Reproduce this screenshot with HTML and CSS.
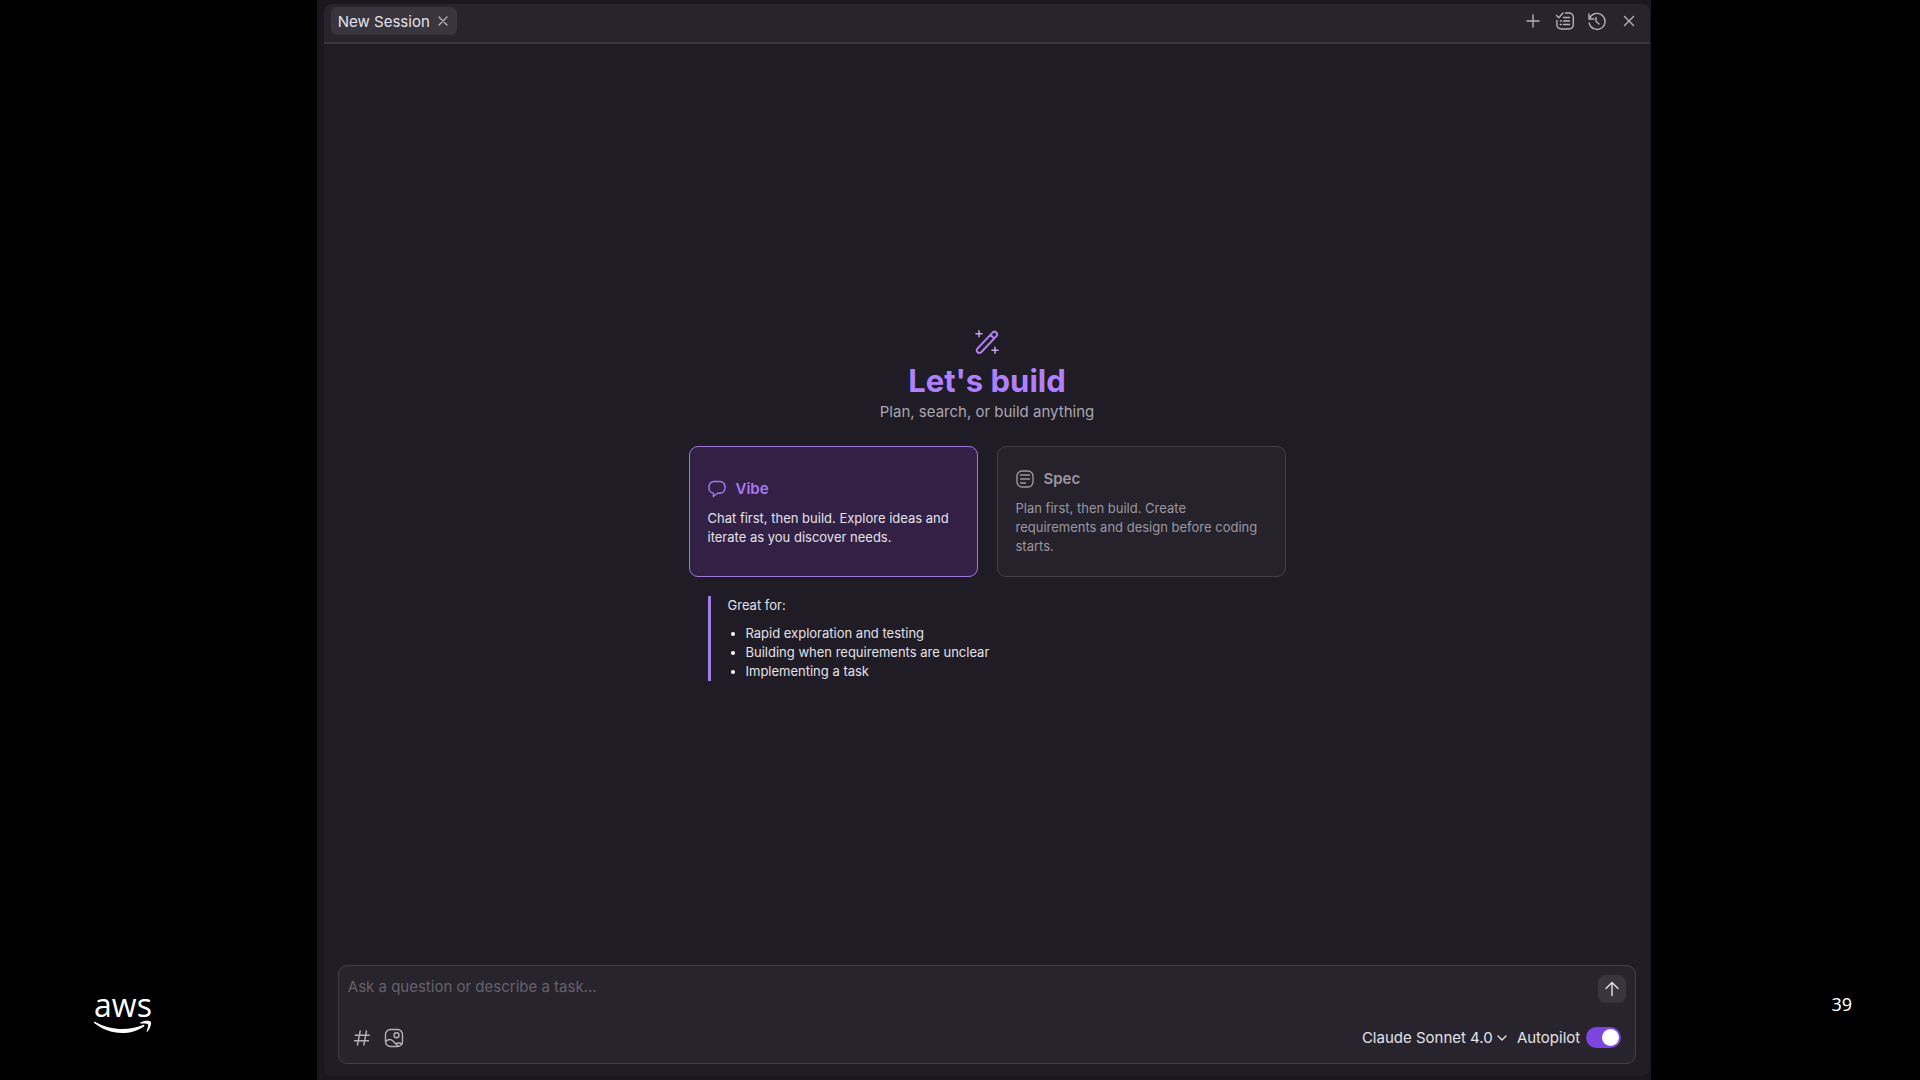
FILE: index.html
```html
<!DOCTYPE html>
<html lang="en">
<head>
    <meta charset="UTF-8">
    <meta name="viewport" content="width=device-width, initial-scale=1.0">
    <title>New Session</title>
    <link rel="stylesheet" href="styles.css">
</head>
<body>

    <!-- Left side with logo -->
    <aside class="side-left">
        <div class="logo">
            <span class="logo-text">aws</span>
            <svg class="logo-smile" width="60" height="16" viewBox="0 0 60 16" fill="#fff">
                <path d="M1 2.2c.4-.6 1.100-.5 1.900 0C10.500 6.500 20 9 29.500 9c6.500 0 14-1.400 20.500-4.100 1.200-.5 2 .7.900 1.500C45 10.700 36.500 13 29 13 18.500 13 9 9.200 1.500 3.300 1 2.900.8 2.500 1 2.200z"/>
                <path d="M47.500 2.500c2.500-1.700 8.800-2.300 10.200-.9 1.100 1.500-.4 7.300-3.200 9.800-.7.500-1.200.2-.9-.5.9-2.200 2-5.500 1.300-6.600-.8-1.100-4.600-.9-6.900-.7-.9.100-1.100-.6-.5-1.100z"/>
            </svg>
        </div>
    </aside>

    <!-- Chat window -->
    <main class="window">
        <section class="panel">
            <header class="tabs">
                <div class="tab">
                    <span>New Session</span>
                    <button class="icon-btn" aria-label="Close session">
                        <svg width="12" height="12" viewBox="0 0 12 12"><path d="M2 2l8 8M10 2l-8 8"/></svg>
                    </button>
                </div>
                <nav class="actions">
                    <button class="icon-btn" aria-label="New session">
                        <svg width="20" height="20" viewBox="0 0 20 20"><path d="M10 4v12M4 10h12"/></svg>
                    </button>
                    <button class="icon-btn" aria-label="Tasks">
                        <svg width="20" height="20" viewBox="0 0 20 20">
                            <path d="M1.500 4.500l2.300 2.200L8 2M10.500 2H14a4.300 4.300 0 0 1 4.300 4.300v7.400A4.300 4.300 0 0 1 14 18H6.200a4.300 4.300 0 0 1-4.300-4.300V9.500M8.500 6.500h6M8.500 10h6M8.500 13.500h6M5.300 10h1M5.300 13.500h1"/>
                        </svg>
                    </button>
                    <button class="icon-btn" aria-label="History">
                        <svg width="20" height="20" viewBox="0 0 20 20">
                            <path d="M2 3v5h5M2.500 7.700A8 8 0 1 1 2.200 12M9 6.500v3.800l3 2.800"/>
                        </svg>
                    </button>
                    <button class="icon-btn" aria-label="Close">
                        <svg width="20" height="20" viewBox="0 0 20 20"><path d="M5.500 5.500l9 9M14.500 5.500l-9 9"/></svg>
                    </button>
                </nav>
            </header>

            <div class="welcome">
                <svg class="wand" width="24" height="24" viewBox="0 0 24 24">
                    <path d="M2.500 18.500 17.500 2.600a2.600 2.600 0 0 1 3.800 3.700L6.200 22.200a2.600 2.600 0 0 1-3.700-3.700zM15.500 4.800l3.600 3.600"/>
                    <path class="spark" d="M4 .8v6M1 3.800h6M20 17.200v6M17 20.200h6"/>
                </svg>
                <h1>Let's build</h1>
                <p class="subtitle">Plan, search, or build anything</p>

                <div class="modes">
                    <button class="card active">
                        <span class="card-title">
                            <svg width="18" height="18" viewBox="0 0 18 18">
                                <path d="M6 1.500h6a5 5 0 0 1 5 5v1.700a5 5 0 0 1-5 5H9.500L5.300 16.500l.2-3.400A4.900 4.900 0 0 1 1 8.200V6.500a5 5 0 0 1 5-5z"/>
                            </svg>
                            Vibe
                        </span>
                        <span class="card-text">Chat first, then build. Explore ideas and iterate as you discover needs.</span>
                    </button>
                    <button class="card">
                        <span class="card-title">
                            <svg width="18" height="18" viewBox="0 0 18 18">
                                <rect x="1" y="1" width="16" height="16" rx="5"/>
                                <path d="M4.500 5h9M4.500 9h9M4.500 13h5"/>
                            </svg>
                            Spec
                        </span>
                        <span class="card-text">Plan first, then build. Create requirements and design before coding starts.</span>
                    </button>
                </div>

                <div class="notes">
                    <p>Great for:</p>
                    <ul>
                        <li>Rapid exploration and testing</li>
                        <li>Building when requirements are unclear</li>
                        <li>Implementing a task</li>
                    </ul>
                </div>
            </div>

            <form class="prompt">
                <div class="prompt-row top">
                    <textarea rows="1" aria-label="Message" placeholder="Ask a question or describe a task..."></textarea>
                    <button type="button" class="send" aria-label="Send">
                        <svg width="16" height="16" viewBox="0 0 16 16"><path d="M8 14.500v-13M2 7.500l6-6 6 6"/></svg>
                    </button>
                </div>
                <div class="prompt-row">
                    <div class="tools">
                        <button type="button" class="icon-btn" aria-label="Add context">
                            <svg width="20" height="20" viewBox="0 0 20 20"><path d="M8.200 3 5.500 17M14.500 3l-2.700 14M3.300 7.200h14M2.500 12.800h14"/></svg>
                        </button>
                        <button type="button" class="icon-btn" aria-label="Add image">
                            <svg width="20" height="20" viewBox="0 0 20 20">
                                <rect x="1.500" y="1.500" width="17" height="17" rx="5"/>
                                <circle cx="12.500" cy="7.300" r="2.500"/>
                                <path d="M1.700 13.500c3-3 5-2.800 7.500-.3l5 5M12 15.500c2-.8 4.500-.5 6 .5"/>
                            </svg>
                        </button>
                    </div>
                    <div class="settings">
                        <div class="model">
                            <select aria-label="Model">
                                <option>Claude Sonnet 4.0</option>
                            </select>
                            <svg width="10" height="10" viewBox="0 0 10 10"><path d="M1 3l4 4 4-4"/></svg>
                        </div>
                        <label for="autopilot">Autopilot</label>
                        <input type="checkbox" id="autopilot" class="switch" checked>
                    </div>
                </div>
            </form>
        </section>
    </main>

    <!-- Right side with page number -->
    <aside class="side-right">
        <span>39</span>
    </aside>

</body>
</html>
```
FILE: styles.css
```css
* {
    box-sizing: border-box;
}

body {
    margin: 0;
    min-height: 100vh;
    display: flex;
    background-color: #000;
    color: #e4e1e8;
    font-family: Inter, "Liberation Sans", sans-serif;
    font-size: 15px;
}

h1, p, ul {
    margin: 0;
}

button, select, textarea {
    font: inherit;
    color: inherit;
    background: none;
    border: none;
    padding: 0;
    margin: 0;
}

button {
    cursor: pointer;
}

svg {
    display: block;
    flex: none;
    fill: none;
    stroke: currentColor;
    stroke-width: 1.4;
    stroke-linecap: round;
    stroke-linejoin: round;
}

/* Sides */
.side-left, .side-right {
    display: flex;
    align-items: flex-end;
}

.side-left {
    width: 16.5%;
    padding: 0 0 44px 93px;
}

.side-right {
    width: 14%;
    justify-content: flex-end;
    padding: 0 68px 64px 0;
    color: #fff;
    font-family: "Noto Sans", sans-serif;
    font-size: 18px;
    line-height: 24px;
}

.logo {
    display: flex;
    flex-direction: column;
    align-items: center;
}

.logo-text {
    color: #fff;
    font-family: "Open Sans", sans-serif;
    font-size: 32px;
    font-weight: 500;
    line-height: 30px;
}

.logo-smile {
    fill: #fff;
    stroke: none;
}

/* Window */
.window {
    flex: 1;
    display: flex;
    padding: 4px 1px 4px 7px;
    background-color: #1a171f;
}

.panel {
    flex: 1;
    display: flex;
    flex-direction: column;
    background-color: #1f1c25;
    border-radius: 8px;
    overflow: hidden;
}

.tabs {
    display: flex;
    justify-content: space-between;
    align-items: center;
    height: 40px;
    padding: 0 11px 4px 7px;
    background-color: #27242d;
    border-bottom: 2px solid #38353f;
}

.tab {
    display: flex;
    align-items: center;
    gap: 7px;
    height: 28px;
    padding: 0 8px 0 7px;
    border-radius: 6px;
    background-color: #38353f;
}

.icon-btn {
    color: #b5b1bc;
}

.actions {
    display: flex;
    gap: 12px;
}

/* Welcome */
.welcome {
    flex: 1;
    display: flex;
    flex-direction: column;
    align-items: center;
    justify-content: center;
    padding-top: 2px;
}

.wand {
    color: #b07df5;
    stroke-width: 2;
}

.spark {
    color: #c6a5f2;
    stroke-width: 1.5;
}

h1 {
    margin-top: 7px;
    color: #b080ff;
    font-size: 31px;
    font-weight: 700;
    line-height: 40px;
}

.subtitle {
    color: #aaa6b1;
    line-height: 22px;
}

.modes {
    display: grid;
    grid-template-columns: 289px 289px;
    gap: 19px;
    margin-top: 23px;
}

.card {
    display: flex;
    flex-direction: column;
    justify-content: center;
    gap: 8px;
    padding: 20px 18px;
    border: 1px solid #423f49;
    border-radius: 9px;
    background-color: #25222b;
    color: #9b97a2;
    text-align: left;
}

.card-title {
    display: flex;
    align-items: center;
    gap: 10px;
    font-weight: 600;
    line-height: 24px;
}

.card-text, .notes {
    font-size: 13px;
    line-height: 19px;
}

.card.active {
    border-color: #a078dc;
    background-color: #322145;
    color: #e4e1e8;
}

.active .card-title {
    color: #ab78f5;
}

.notes {
    width: 597px;
    margin-top: 19px;
    position: relative;
    padding-left: 39px;
}

/* Accent bar beside the notes */
.notes::before {
    content: '';
    position: absolute;
    top: 0;
    bottom: 0;
    left: 19px;
    width: 3px;
    background-color: #a57be6;
}

.notes ul {
    margin-top: 9px;
    padding-left: 18px;
}

.notes li::marker {
    color: #fff;
}

/* Prompt */
.prompt {
    margin: 0 14px 12px;
    padding: 9px 9px 15px;
    border: 1px solid #423f49;
    border-radius: 9px;
    background-color: #27242d;
}

.prompt-row {
    display: flex;
    justify-content: space-between;
    align-items: center;
}

.prompt-row.top {
    align-items: flex-start;
    margin-bottom: 24px;
}

textarea {
    flex: 1;
    height: 24px;
    line-height: 24px;
    resize: none;
    outline: none;
    overflow: hidden;
}

textarea::placeholder {
    color: #65616b;
}

.send {
    display: flex;
    align-items: center;
    justify-content: center;
    width: 28px;
    height: 28px;
    border-radius: 8px;
    background-color: #38353e;
}

.tools {
    display: flex;
    gap: 12px;
    padding-left: 4px;
}

.settings {
    display: flex;
    align-items: center;
    padding-right: 5px;
}

.model {
    display: flex;
    align-items: center;
    gap: 4px;
    margin-right: 10px;
}

.model select {
    appearance: none;
    outline: none;
}

.switch {
    appearance: none;
    display: flex;
    justify-content: flex-end;
    width: 35px;
    height: 21px;
    margin: 0 0 0 6px;
    padding: 2px;
    border-radius: 11px;
    background-color: #7d45e0;
    cursor: pointer;
}

.switch::before {
    content: '';
    width: 17px;
    height: 17px;
    border-radius: 50%;
    background-color: #fff;
}

.switch:not(:checked) {
    justify-content: flex-start;
    background-color: #4a4650;
}
```
